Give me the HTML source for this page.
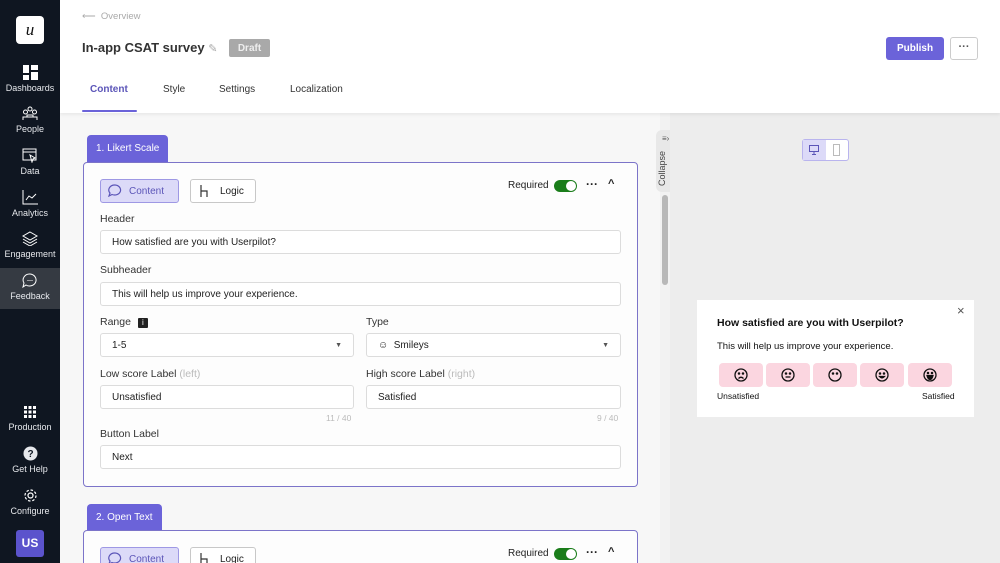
<!DOCTYPE html>
<html><head><meta charset="utf-8"><style>
*{box-sizing:border-box;margin:0;padding:0}
html,body{width:1000px;height:563px;overflow:hidden}
body{font-family:"Liberation Sans",sans-serif;position:relative;background:#f8f8f8;color:#222}
.a{position:absolute}
.sb{left:0;top:0;width:60px;height:563px;background:#0f1621}
.ni{position:absolute;left:0;width:60px;text-align:center;color:#e6e8ec;font-size:9px}
.ni svg{display:block;margin:0 auto 3px}
.lbl{font-size:10.5px;color:#333}
.inp{position:absolute;height:24px;border:1px solid #dcdcdc;border-radius:3px;background:#fff;font-size:10px;color:#222;padding:0 11px;line-height:23px}
.card{border:1px solid #7c74c9;border-radius:4px;background:#fdfdfd}
.tab{background:#6b63d9;color:#fff;font-size:10px;border-radius:4px 4px 0 0;padding:0 9px;line-height:27px}
.btn{position:absolute;height:24px;border:1px solid #c8c8c8;border-radius:3px;font-size:10px;line-height:23px;background:#fff}
.sm{width:44px;height:24px;background:#fbd6e0;border-radius:4px;position:absolute;top:363px}
.sm svg{position:absolute;left:15px;top:5px}
</style></head><body>
<div class="a" style="left:60px;top:113px;width:600px;height:450px;background:#f7f7f7"></div>
<div class="a" style="left:670px;top:113px;width:330px;height:450px;background:#ededed"></div>
<div class="a" style="left:660px;top:113px;width:10px;height:450px;background:#f2f2f2"></div>
<div class="a" style="left:662px;top:195px;width:6px;height:90px;background:#b8b8b8;border-radius:3px"></div>
<div class="a" style="left:656px;top:130px;width:14px;height:62px;background:#e8e8e8;border-radius:6px 0 0 6px"></div>
<div class="a" style="left:657px;top:186px;font-size:9px;color:#444;transform:rotate(-90deg);transform-origin:0 0;">Collapse</div>
<div class="a" style="left:662px;top:134px;font-size:8px;color:#555">≡›</div>
<!-- header -->
<div class="a" style="left:60px;top:0;width:940px;height:113px;background:#fff;box-shadow:0 2px 3px rgba(0,0,0,.06)"></div>
<div class="a" style="left:82px;top:11px;font-size:9.5px;color:#aaa">⟵&nbsp; Overview</div>
<div class="a" style="left:82px;top:40px;font-size:13px;font-weight:bold;color:#333">In-app CSAT survey <span style="color:#aaa;font-weight:normal;font-size:11px">✎</span></div>
<div class="a" style="left:229px;top:39px;width:41px;height:18px;background:#a9a9a9;color:#eee;font-size:10px;border-radius:2px;text-align:center;line-height:19px;font-weight:bold">Draft</div>
<div class="a" style="left:886px;top:37px;width:58px;height:23px;background:#6b63d9;color:#fff;font-weight:bold;font-size:10px;border-radius:3px;text-align:center;line-height:23px">Publish</div>
<div class="a" style="left:950px;top:37px;width:28px;height:23px;border:1px solid #ccc;border-radius:3px;text-align:center;line-height:18px;font-size:11px;font-weight:bold;color:#555">···</div>
<div class="a" style="left:90px;top:84px;font-size:10px;color:#5b55b8;font-weight:bold">Content</div>
<div class="a" style="left:82px;top:110px;width:55px;height:2px;background:#6b63d9;border-radius:2px"></div>
<div class="a" style="left:163px;top:84px;font-size:10px;color:#333">Style</div>
<div class="a" style="left:219px;top:84px;font-size:10px;color:#333">Settings</div>
<div class="a" style="left:290px;top:84px;font-size:10px;color:#333">Localization</div>
<!-- sidebar -->
<div class="a sb"></div>
<div class="a" style="left:16px;top:16px;width:28px;height:28px;background:#fff;border-radius:4px;text-align:center;font:italic 17px 'Liberation Serif',serif;line-height:27px;color:#111">u</div>
<div class="ni" style="top:65px"><svg width="15" height="15"><rect x="0" y="0" width="6" height="8" fill="#fff"/><rect x="8" y="0" width="7" height="5" fill="#fff"/><rect x="0" y="10" width="6" height="5" fill="#fff"/><rect x="8" y="7" width="7" height="8" fill="#fff"/></svg>Dashboards</div>
<div class="ni" style="top:106px"><svg width="16" height="15" fill="none" stroke="#fff" stroke-width="1"><circle cx="8" cy="3" r="2"/><circle cx="3.5" cy="6" r="2"/><circle cx="12.5" cy="6" r="2"/><path d="M1 14v-3h14v3M5 11v-2h6v2"/></svg>People</div>
<div class="ni" style="top:148px"><svg width="16" height="15" fill="none" stroke="#fff" stroke-width="1"><rect x="1" y="1" width="13" height="11"/><path d="M1 4h13M8 7l5 3-2 1-1 3z"/></svg>Data</div>
<div class="ni" style="top:190px"><svg width="16" height="15" fill="none" stroke="#fff" stroke-width="1"><path d="M1 0v14h15M4 10l3-4 3 2 4-4"/></svg>Analytics</div>
<div class="ni" style="top:231px"><svg width="16" height="15" fill="none" stroke="#fff" stroke-width="1"><path d="M8 1l7 4-7 4-7-4zM1 8l7 4 7-4M1 11l7 4 7-4"/></svg>Engagement</div>
<div class="a" style="left:0;top:268px;width:60px;height:41px;background:#353a42"></div>
<div class="ni" style="top:273px"><svg width="16" height="15" fill="none" stroke="#fff" stroke-width="1"><path d="M8 1a6.5 6 0 1 1-4 11l-3 2 1-4A6.5 6 0 0 1 8 1z"/><path d="M5.5 7.5h1M7.5 7.5h1M9.5 7.5h1"/></svg>Feedback</div>
<div class="ni" style="top:405px"><svg width="14" height="14" fill="#fff"><rect x="1" y="1" width="3" height="3"/><rect x="5.5" y="1" width="3" height="3"/><rect x="10" y="1" width="3" height="3"/><rect x="1" y="5.5" width="3" height="3"/><rect x="5.5" y="5.5" width="3" height="3"/><rect x="10" y="5.5" width="3" height="3"/><rect x="1" y="10" width="3" height="3"/><rect x="5.5" y="10" width="3" height="3"/><rect x="10" y="10" width="3" height="3"/></svg>Production</div>
<div class="ni" style="top:446px"><svg width="15" height="15"><circle cx="7.5" cy="7.5" r="7" fill="#e6e8ec"/><text x="7.5" y="11" font-size="10" font-weight="bold" text-anchor="middle" fill="#0f1621" font-family="Liberation Sans">?</text></svg>Get Help</div>
<div class="ni" style="top:488px"><svg width="15" height="15" fill="none" stroke="#fff" stroke-width="1.2"><circle cx="7.5" cy="7.5" r="2.5"/><circle cx="7.5" cy="7.5" r="5.5" stroke-dasharray="2.5 1.8"/></svg>Configure</div>
<div class="a" style="left:16px;top:530px;width:28px;height:27px;background:#5b53cc;border-radius:3px;color:#fff;font-weight:bold;font-size:12px;text-align:center;line-height:27px">US</div>
<!-- card 1 -->
<div class="a tab" style="left:87px;top:135px;height:27px">1. Likert Scale</div>
<div class="a card" style="left:83px;top:162px;width:555px;height:325px"></div>
<div class="btn" style="left:100px;top:179px;width:79px;background:#dcdaf8;border-color:#9e98e4;color:#5b55b8;padding-left:28px">Content</div>
<svg class="a" style="left:108px;top:184px" width="14" height="13" fill="none" stroke="#5b55b8" stroke-width="1.2"><path d="M7 1a6 5 0 1 1-3 9.5L1 12l1-3A6 5 0 0 1 7 1z"/></svg>
<div class="btn" style="left:190px;top:179px;width:66px;padding-left:29px;color:#222">Logic</div>
<svg class="a" style="left:199px;top:184px" width="12" height="14" fill="none" stroke="#333" stroke-width="1.2"><path d="M2 1v12M2 7h6v6"/></svg>
<div class="a" style="left:508px;top:180px;font-size:10px">Required</div>
<div class="a" style="left:554px;top:180px;width:23px;height:12px;border-radius:6px;background:#1a7d1a"><div style="position:absolute;right:1px;top:1px;width:10px;height:10px;border-radius:5px;background:#fff"></div></div>
<div class="a" style="left:586px;top:177px;font-size:12px;font-weight:bold">···</div>
<div class="a" style="left:608px;top:178px;font-size:11px;font-weight:bold">^</div>
<div class="a lbl" style="left:100px;top:213px">Header</div>
<div class="inp" style="left:100px;top:230px;width:521px">How satisfied are you with Userpilot?</div>
<div class="a lbl" style="left:100px;top:264px">Subheader</div>
<div class="inp" style="left:100px;top:282px;width:521px">This will help us improve your experience.</div>
<div class="a lbl" style="left:100px;top:316px">Range <span style="display:inline-block;width:10px;height:10px;background:#222;color:#fff;font-size:8px;text-align:center;line-height:10px;border-radius:1px;margin-left:4px">i</span></div>
<div class="inp" style="left:100px;top:333px;width:254px">1-5<span style="float:right;font-size:7px;color:#555">▼</span></div>
<div class="a lbl" style="left:366px;top:316px">Type</div>
<div class="inp" style="left:366px;top:333px;width:255px">☺&nbsp; Smileys<span style="float:right;font-size:7px;color:#555">▼</span></div>
<div class="a lbl" style="left:100px;top:368px">Low score Label <span style="color:#bbb">(left)</span></div>
<div class="inp" style="left:100px;top:385px;width:254px">Unsatisfied</div>
<div class="a" style="left:326px;top:413px;font-size:8.5px;color:#bbb">11 / 40</div>
<div class="a lbl" style="left:366px;top:368px">High score Label <span style="color:#bbb">(right)</span></div>
<div class="inp" style="left:366px;top:385px;width:255px">Satisfied</div>
<div class="a" style="left:597px;top:413px;font-size:8.5px;color:#bbb">9 / 40</div>
<div class="a lbl" style="left:100px;top:428px">Button Label</div>
<div class="inp" style="left:100px;top:445px;width:521px">Next</div>
<!-- card 2 -->
<div class="a tab" style="left:87px;top:504px;height:26px">2. Open Text</div>
<div class="a card" style="left:83px;top:530px;width:555px;height:40px"></div>
<div class="btn" style="left:100px;top:547px;width:79px;background:#dcdaf8;border-color:#9e98e4;color:#5b55b8;padding-left:28px">Content</div>
<svg class="a" style="left:108px;top:552px" width="14" height="13" fill="none" stroke="#5b55b8" stroke-width="1.2"><path d="M7 1a6 5 0 1 1-3 9.5L1 12l1-3A6 5 0 0 1 7 1z"/></svg>
<div class="btn" style="left:190px;top:547px;width:66px;padding-left:29px">Logic</div>
<svg class="a" style="left:199px;top:552px" width="12" height="14" fill="none" stroke="#333" stroke-width="1.2"><path d="M2 1v12M2 7h6v6"/></svg>
<div class="a" style="left:508px;top:548px;font-size:10px">Required</div>
<div class="a" style="left:554px;top:548px;width:23px;height:12px;border-radius:6px;background:#1a7d1a"><div style="position:absolute;right:1px;top:1px;width:10px;height:10px;border-radius:5px;background:#fff"></div></div>
<div class="a" style="left:586px;top:545px;font-size:12px;font-weight:bold">···</div>
<div class="a" style="left:608px;top:546px;font-size:11px;font-weight:bold">^</div>
<!-- preview -->
<div class="a" style="left:802px;top:139px;width:47px;height:22px;border:1px solid #b9b4ee;border-radius:3px;background:#fff"></div>
<div class="a" style="left:803px;top:140px;width:23px;height:20px;background:#dcdaf8"></div>
<svg class="a" style="left:809px;top:145px" width="10" height="10" fill="none" stroke="#5b55b8"><rect x="0.5" y="0.5" width="9" height="6"/><path d="M5 7v2M3 9.5h4"/></svg>
<svg class="a" style="left:833px;top:144px" width="7" height="12" fill="none" stroke="#bbb"><rect x="0.5" y="0.5" width="6" height="11"/></svg>
<div class="a" style="left:697px;top:300px;width:277px;height:117px;background:#fff"></div>
<div class="a" style="left:957px;top:303px;font-size:13px;color:#555">×</div>
<div class="a" style="left:717px;top:317px;font-size:10.5px;font-weight:bold;color:#111">How satisfied are you with Userpilot?</div>
<div class="a" style="left:717px;top:341px;font-size:9.5px;color:#111">This will help us improve your experience.</div>
<div class="sm" style="left:719px"><svg width="14" height="14" fill="none" stroke="#111" stroke-width="1.3"><circle cx="7" cy="7" r="6"/><circle cx="5" cy="5.5" r=".6" fill="#111"/><circle cx="9" cy="5.5" r=".6" fill="#111"/><path d="M4.5 10.5q2.5-2.5 5 0"/></svg></div>
<div class="sm" style="left:766px"><svg width="14" height="14" fill="none" stroke="#111" stroke-width="1.3"><circle cx="7" cy="7" r="6"/><circle cx="5" cy="5.5" r=".6" fill="#111"/><circle cx="9" cy="5.5" r=".6" fill="#111"/><path d="M4.5 9h5"/></svg></div>
<div class="sm" style="left:813px"><svg width="14" height="14" fill="none" stroke="#111" stroke-width="1.3"><circle cx="7" cy="7" r="6"/><circle cx="5" cy="5.5" r=".6" fill="#111"/><circle cx="9" cy="5.5" r=".6" fill="#111"/></svg></div>
<div class="sm" style="left:860px"><svg width="14" height="14" fill="none" stroke="#111" stroke-width="1.3"><circle cx="7" cy="7" r="6"/><circle cx="5" cy="5.5" r=".6" fill="#111"/><circle cx="9" cy="5.5" r=".6" fill="#111"/><path d="M4.5 8.5q2.5 3 5 0z" fill="#111"/></svg></div>
<div class="sm" style="left:908px"><svg width="14" height="14" fill="none" stroke="#111" stroke-width="1.3"><circle cx="7" cy="7" r="6"/><circle cx="5" cy="5" r=".6" fill="#111"/><circle cx="9" cy="5" r=".6" fill="#111"/><path d="M4 7.5h6q-1 4-3 4t-3-4z" fill="#111"/></svg></div>
<div class="a" style="left:717px;top:391px;font-size:8.5px;color:#111">Unsatisfied</div>
<div class="a" style="left:922px;top:391px;font-size:8.5px;color:#111">Satisfied</div>
</body></html>
